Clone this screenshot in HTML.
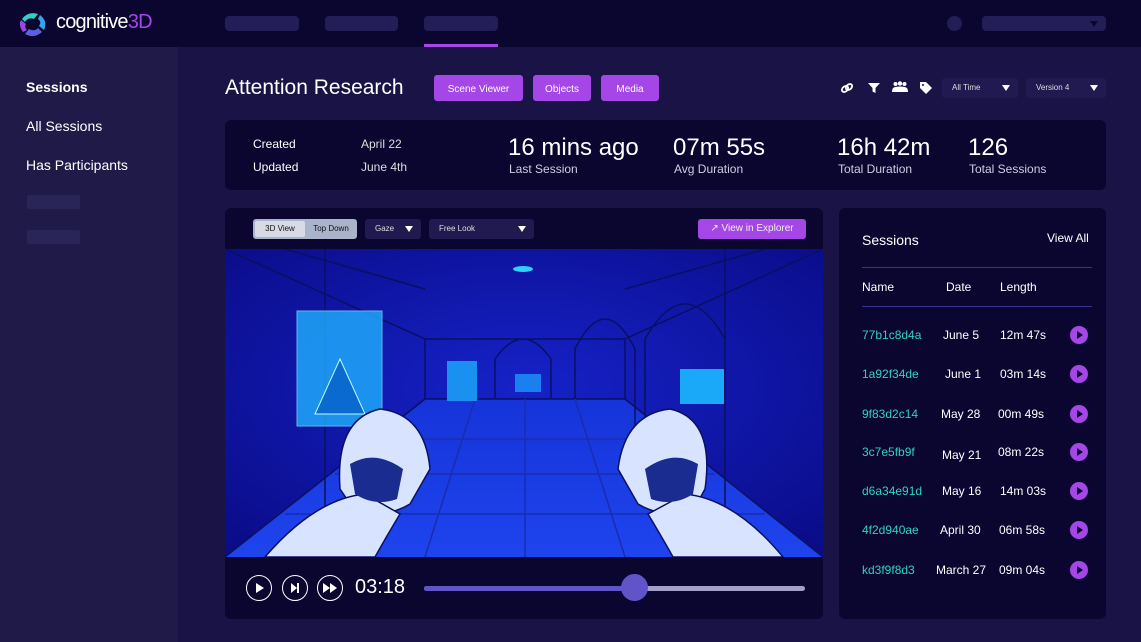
<!DOCTYPE html>
<html><head><meta charset="utf-8"><style>
*{margin:0;padding:0;box-sizing:border-box}
body{width:1141px;height:642px;overflow:hidden;background:#1a1345;font-family:"Liberation Sans",sans-serif;color:#fff;position:relative}
.abs{position:absolute}
.top{left:0;top:0;width:1141px;height:47px;background:#0b0630}
.ph{background:#231d58;border-radius:4px;height:15px;top:16px}
.side{left:0;top:47px;width:178px;height:595px;background:#1f1a47}
.card{background:#0b0630;border-radius:6px}
.btn{background:#a447e6;border-radius:3px;font-size:10px;text-align:center;line-height:27px;height:26px;top:75px;padding-top:1px}
.sel{background:#211a50;border-radius:3px;font-size:8px;color:#ddd;height:20px;line-height:20px;padding-left:10px}
.tri{position:absolute;right:8px;top:7px;width:0;height:0;border-left:4px solid transparent;border-right:4px solid transparent;border-top:6px solid #fff}
.big{font-size:24px}
.lab{font-size:12px;color:#cfcde0}
.row{position:absolute;left:862px;font-size:12px;width:230px;height:20px}
.row span{position:absolute;top:2px}
.pl{position:absolute;left:208px;top:0;width:18px;height:18px;border-radius:50%;background:#a447e6}
.pl:after{content:"";position:absolute;left:7px;top:5px;border-top:4px solid transparent;border-bottom:4px solid transparent;border-left:6px solid #0b0630}
.cb{position:absolute;width:26px;height:26px;border:1.5px solid #fff;border-radius:50%;top:575px}
</style></head><body>
<div class="abs top"></div>
<svg class="abs" style="left:18px;top:11px" width="30" height="26" viewBox="0 0 30 26"><path d="M4 8 Q10 0 20 3 L16 8 Q10 6 7 11Z" fill="#2fd1c4"/><path d="M22 4 Q30 10 26 19 L21 15 Q24 11 20 8Z" fill="#3aa0e8"/><path d="M24 21 Q16 28 7 23 L11 18 Q16 21 20 17Z" fill="#5c5fe0"/><path d="M5 21 Q0 14 3 9 L8 13 Q6 16 9 19Z" fill="#9a48e0"/></svg>
<div class="abs" style="left:56px;top:11px;font-size:20px;letter-spacing:-0.8px">cognitive<span style="color:#a447e6">3D</span></div>
<div class="abs ph" style="left:225px;width:74px"></div>
<div class="abs ph" style="left:325px;width:73px"></div>
<div class="abs ph" style="left:424px;width:74px"></div>
<div class="abs" style="left:424px;top:44px;width:74px;height:3px;background:#a447e6"></div>
<div class="abs" style="left:947px;top:16px;width:15px;height:15px;border-radius:50%;background:#231d58"></div>
<div class="abs ph" style="left:982px;width:124px"><div class="tri" style="top:5px;border-top-color:#0b0630"></div></div>

<div class="abs side"></div>
<div class="abs" style="left:26px;top:79px;font-size:14px;font-weight:bold">Sessions</div>
<div class="abs" style="left:26px;top:118px;font-size:14px">All Sessions</div>
<div class="abs" style="left:26px;top:157px;font-size:14px">Has Participants</div>
<div class="abs" style="left:27px;top:195px;width:53px;height:14px;background:#2a2557;border-radius:2px"></div>
<div class="abs" style="left:27px;top:230px;width:53px;height:14px;background:#2a2557;border-radius:2px"></div>

<div class="abs" style="left:225px;top:76px;font-size:21px">Attention Research</div>
<div class="abs btn" style="left:434px;width:89px">Scene Viewer</div>
<div class="abs btn" style="left:533px;width:58px">Objects</div>
<div class="abs btn" style="left:601px;width:58px">Media</div>
<svg class="abs" style="left:840px;top:82px" width="14" height="12"><g fill="none" stroke="#fff" stroke-width="1.8"><ellipse cx="5" cy="7" rx="3.5" ry="2.5" transform="rotate(-40 5 7)"/><ellipse cx="9" cy="5" rx="3.5" ry="2.5" transform="rotate(-40 9 5)"/></g></svg>
<svg class="abs" style="left:868px;top:82px" width="12" height="12"><path d="M0 1H12L7.5 6V11L4.5 9.5V6Z" fill="#fff"/></svg>
<svg class="abs" style="left:892px;top:81px" width="16" height="13"><circle cx="3.5" cy="3" r="2" fill="#fff"/><circle cx="8" cy="2.5" r="2.2" fill="#fff"/><circle cx="12.5" cy="3" r="2" fill="#fff"/><path d="M0 11 Q0 6 3.5 6 Q8 5 12.5 6 Q16 6 16 11Z" fill="#fff"/></svg>
<svg class="abs" style="left:920px;top:82px" width="12" height="12"><path d="M0 0H6L12 6 6 12 0 6Z" fill="#fff"/><circle cx="3" cy="3" r="1" fill="#1a1345"/></svg>
<div class="abs sel" style="left:942px;top:78px;width:76px">All Time<div class="tri"></div></div>
<div class="abs sel" style="left:1026px;top:78px;width:80px">Version 4<div class="tri"></div></div>

<div class="abs card" style="left:225px;top:120px;width:881px;height:70px"></div>
<div class="abs" style="left:253px;top:133px;font-size:12px;line-height:23px">Created<br>Updated</div>
<div class="abs" style="left:361px;top:133px;font-size:12px;line-height:23px;color:#ddd">April 22<br>June 4th</div>
<div class="abs big" style="left:508px;top:134px">16 mins ago</div><div class="abs lab" style="left:509px;top:162px">Last Session</div>
<div class="abs big" style="left:673px;top:134px">07m 55s</div><div class="abs lab" style="left:674px;top:162px">Avg Duration</div>
<div class="abs big" style="left:837px;top:134px">16h 42m</div><div class="abs lab" style="left:838px;top:162px">Total Duration</div>
<div class="abs big" style="left:968px;top:134px">126</div><div class="abs lab" style="left:969px;top:162px">Total Sessions</div>

<div class="abs card" style="left:225px;top:208px;width:598px;height:411px"></div>
<div class="abs" style="left:253px;top:219px;width:104px;height:20px;background:#a9b3c9;border-radius:3px"></div>
<div class="abs" style="left:255px;top:221px;width:50px;height:16px;background:#d6dbe6;border-radius:2px;color:#111;font-size:8px;text-align:center;line-height:16px">3D View</div>
<div class="abs" style="left:306px;top:221px;width:50px;height:16px;color:#111;font-size:8px;text-align:center;line-height:16px">Top Down</div>
<div class="abs sel" style="left:365px;top:219px;width:56px">Gaze<div class="tri"></div></div>
<div class="abs sel" style="left:429px;top:219px;width:105px">Free Look<div class="tri"></div></div>
<div class="abs" style="left:698px;top:219px;width:108px;height:20px;background:#a447e6;border-radius:3px;font-size:10px;line-height:20px;text-align:center;color:#eee">&#8599; View in Explorer</div>

<svg class="abs" style="left:225px;top:249px" width="598" height="308" viewBox="0 0 598 308">
<defs><radialGradient id="g" cx="50%" cy="45%" r="70%"><stop offset="0" stop-color="#1622c8"/><stop offset="1" stop-color="#0a0c88"/></radialGradient>
<linearGradient id="f" x1="0" y1="0" x2="0" y2="1"><stop offset="0" stop-color="#1634d8"/><stop offset="1" stop-color="#1e44ee"/></linearGradient></defs>
<rect width="598" height="308" fill="url(#g)"/>
<path d="M0 308 L200 150 H400 L598 308Z" fill="url(#f)"/>
<g stroke="#0a1060" stroke-width="1.5" fill="none"><path d="M0 0 L200 90 M598 0 L400 90 M200 90 V150 H400 V90 H200 M0 308 L200 150 M598 308 L400 150 M100 0 V280 M500 0 V280 M60 0 L200 40 M540 0 L400 40"/><path d="M270 150 V110 Q298 70 326 110 V150 M350 150 V100 Q380 40 410 100 V200 M420 200 V90 Q460 20 500 90"/>
<path d="M150 190 H450 M110 225 H490 M60 265 H540 M250 150 L200 308 M300 150 V308 M350 150 L400 308" stroke="#1a2cb0"/></g>
<rect x="72" y="62" width="85" height="115" fill="#1fb0ff" opacity=".8" stroke="#6fe0ff"/>
<path d="M90 165 L115 110 L140 165Z" fill="#0a6ad0" stroke="#bff" />
<rect x="222" y="112" width="30" height="40" fill="#1a90f0"/>
<rect x="455" y="120" width="44" height="35" fill="#1aa8f8"/>
<rect x="290" y="125" width="26" height="18" fill="#1a80f0"/>
<ellipse cx="298" cy="20" rx="10" ry="3" fill="#2fd0ff"/>
<g fill="#d8e4ff" stroke="#0a1060" stroke-width="1.5">
<path d="M115 240 Q110 170 155 160 Q200 165 205 220 L185 255 Q160 270 130 262Z"/>
<path d="M40 308 Q90 250 140 245 L175 265 Q160 290 150 308Z"/>
<path d="M480 240 Q490 170 445 160 Q400 165 393 220 L413 255 Q438 270 468 262Z"/>
<path d="M558 308 Q510 250 460 245 L423 265 Q438 290 448 308Z"/>
</g>
<path d="M125 215 Q150 200 178 220 L172 250 Q150 258 130 245Z" fill="#1a2c90"/>
<path d="M473 215 Q448 200 420 220 L426 250 Q448 258 468 245Z" fill="#1a2c90"/>
</svg>

<div class="cb" style="left:246px"><div style="position:absolute;left:9px;top:7px;border-top:5px solid transparent;border-bottom:5px solid transparent;border-left:8px solid #fff"></div></div>
<div class="cb" style="left:282px"><div style="position:absolute;left:8px;top:7px;border-top:5px solid transparent;border-bottom:5px solid transparent;border-left:6px solid #fff"></div><div style="position:absolute;left:14px;top:7px;width:2px;height:10px;background:#fff"></div></div>
<div class="cb" style="left:317px"><div style="position:absolute;left:5px;top:7px;border-top:5px solid transparent;border-bottom:5px solid transparent;border-left:7px solid #fff"></div><div style="position:absolute;left:12px;top:7px;border-top:5px solid transparent;border-bottom:5px solid transparent;border-left:7px solid #fff"></div></div>
<div class="abs" style="left:355px;top:576px;font-size:20px">03:18</div>
<div class="abs" style="left:424px;top:586px;width:381px;height:5px;border-radius:3px;background:#a69ecb"></div>
<div class="abs" style="left:424px;top:586px;width:210px;height:5px;border-radius:3px;background:#5f55c8"></div>
<div class="abs" style="left:621px;top:574px;width:27px;height:27px;border-radius:50%;background:#5f55c8"></div>

<div class="abs card" style="left:839px;top:208px;width:267px;height:411px"></div>
<div class="abs" style="left:862px;top:232px;font-size:14px">Sessions</div>
<div class="abs" style="left:1047px;top:231px;font-size:12px">View All</div>
<div class="abs" style="left:862px;top:267px;width:230px;height:1px;background:#3a3290"></div>
<div class="abs" style="left:862px;top:280px;font-size:12px">Name</div>
<div class="abs" style="left:946px;top:280px;font-size:12px">Date</div>
<div class="abs" style="left:1000px;top:280px;font-size:12px">Length</div>
<div class="abs" style="left:862px;top:306px;width:230px;height:1px;background:#3a3290"></div>
<div class="row" style="top:326px"><span style="color:#2fd1c4">77b1c8d4a</span><span style="left:81px">June 5</span><span style="left:138px">12m 47s</span><div class="pl"></div></div>
<div class="row" style="top:365px"><span style="color:#2fd1c4">1a92f34de</span><span style="left:83px">June 1</span><span style="left:138px">03m 14s</span><div class="pl"></div></div>
<div class="row" style="top:405px"><span style="color:#2fd1c4">9f83d2c14</span><span style="left:79px">May 28</span><span style="left:136px">00m 49s</span><div class="pl"></div></div>
<div class="row" style="top:443px"><span style="color:#2fd1c4">3c7e5fb9f</span><span style="left:80px;top:5px">May 21</span><span style="left:136px">08m 22s</span><div class="pl"></div></div>
<div class="row" style="top:482px"><span style="color:#2fd1c4">d6a34e91d</span><span style="left:80px">May 16</span><span style="left:138px">14m 03s</span><div class="pl"></div></div>
<div class="row" style="top:521px"><span style="color:#2fd1c4">4f2d940ae</span><span style="left:78px">April 30</span><span style="left:137px">06m 58s</span><div class="pl"></div></div>
<div class="row" style="top:561px"><span style="color:#2fd1c4">kd3f9f8d3</span><span style="left:74px">March 27</span><span style="left:137px">09m 04s</span><div class="pl"></div></div>
</body></html>
